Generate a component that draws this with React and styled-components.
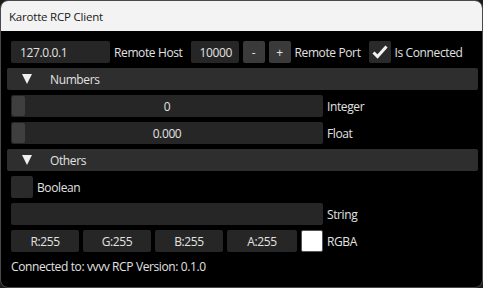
import styled, { createGlobalStyle } from "styled-components"

const Global = createGlobalStyle`
  html, body { margin: 0; padding: 0; background: #1c1c1c; }
  body { font-family: "Open Sans", "Noto Sans", sans-serif; }
`

const Window = styled.div`
  box-sizing: border-box;
  width: 483px;
  height: 288px;
  border: 1px solid #4a4a4a;
  border-radius: 8px;
  overflow: hidden;
  background: #000;
  display: flex;
  flex-direction: column;
`
const TitleBar = styled.div`
  height: 30px;
  flex-shrink: 0;
  background: #f3f3f3;
  color: #1a1a1a;
  font-size: 11.5px;
  letter-spacing: -0.2px;
  display: flex;
  align-items: center;
  padding-left: 8px;
`
const Content = styled.div`
  padding: 10px 10px 0 10px;
  display: flex;
  flex-direction: column;
  gap: 5px;
  color: #e2e2e2;
  font-size: 12px;
  letter-spacing: -0.38px;
`
const Row = styled.div`
  display: flex;
  align-items: center;
  gap: 4px;
  height: 22px;
`
const Frame = styled.div`
  box-sizing: border-box;
  height: 22px;
  width: ${p => p.w}px;
  background: #262626;
  border-radius: 2px;
  display: flex;
  align-items: center;
  justify-content: ${p => (p.center ? "center" : "flex-start")};
  padding-left: ${p => (p.center ? 0 : 9)}px;
  flex-shrink: 0;
`
const Label = styled.span`
  white-space: nowrap;
`
const SmallButton = styled.div`
  width: 22px;
  height: 22px;
  border-radius: 2px;
  background: #3a3a3a;
  display: flex;
  align-items: center;
  justify-content: center;
  flex-shrink: 0;
`
const CheckBox = styled.div`
  width: 22px;
  height: 22px;
  border-radius: 2px;
  background: #2a2a2a;
  display: flex;
  align-items: center;
  justify-content: center;
  flex-shrink: 0;
`
const Header = styled.div`
  height: 22px;
  margin: 0 -6px 0 -4px;
  background: #2e2e2e;
  border-radius: 2px;
  display: flex;
  align-items: center;
  padding-left: 15px;
  gap: 18px;
`
const Triangle = styled.div`
  width: 0;
  height: 0;
  border-left: 5.5px solid transparent;
  border-right: 5.5px solid transparent;
  border-top: 10px solid #f0f0f0;
`
const Slider = styled.div`
  position: relative;
  box-sizing: border-box;
  width: 312px;
  height: 22px;
  background: #262626;
  border-radius: 2px;
  display: flex;
  align-items: center;
  justify-content: center;
  flex-shrink: 0;
`
const Grab = styled.div`
  position: absolute;
  left: 1px;
  top: 1px;
  width: 13px;
  height: 20px;
  background: #3f3f3f;
  border-radius: 2px;
`
const Swatch = styled.div`
  box-sizing: border-box;
  width: 22px;
  height: 22px;
  background: #fff;
  border: 1px solid #555;
  border-radius: 2px;
  flex-shrink: 0;
`
const Status = styled.div`
  height: 18px;
  display: flex;
  align-items: center;
`

const Check = () => (
  <svg width="18" height="18" viewBox="0 0 18 18">
    <polyline points="2.5,9.5 6.5,13.5 15.5,3.5" fill="none" stroke="#f2f2f2" strokeWidth="3" />
  </svg>
)

const App = () => {
  return (
    <>
      <Global />
      <Window>
        <TitleBar>Karotte RCP Client</TitleBar>
        <Content>
          <Row>
            <Frame w={99}>127.0.0.1</Frame>
            <Label>Remote Host</Label>
            <Frame w={48} style={{ marginLeft: 4 }}>10000</Frame>
            <SmallButton>-</SmallButton>
            <SmallButton>+</SmallButton>
            <Label>Remote Port</Label>
            <CheckBox style={{ marginLeft: 4 }}><Check /></CheckBox>
            <Label>Is Connected</Label>
          </Row>
          <Header><Triangle />Numbers</Header>
          <Row>
            <Slider><Grab />0</Slider>
            <Label>Integer</Label>
          </Row>
          <Row>
            <Slider><Grab />0.000</Slider>
            <Label>Float</Label>
          </Row>
          <Header><Triangle />Others</Header>
          <Row>
            <CheckBox />
            <Label>Boolean</Label>
          </Row>
          <Row>
            <Frame w={312} />
            <Label>String</Label>
          </Row>
          <Row>
            <Frame w={68} center>R:255</Frame>
            <Frame w={68} center>G:255</Frame>
            <Frame w={68} center>B:255</Frame>
            <Frame w={70} center>A:255</Frame>
            <Swatch />
            <Label>RGBA</Label>
          </Row>
          <Status>Connected to: vvvv RCP Version: 0.1.0</Status>
        </Content>
      </Window>
    </>
  )
}

export default App
